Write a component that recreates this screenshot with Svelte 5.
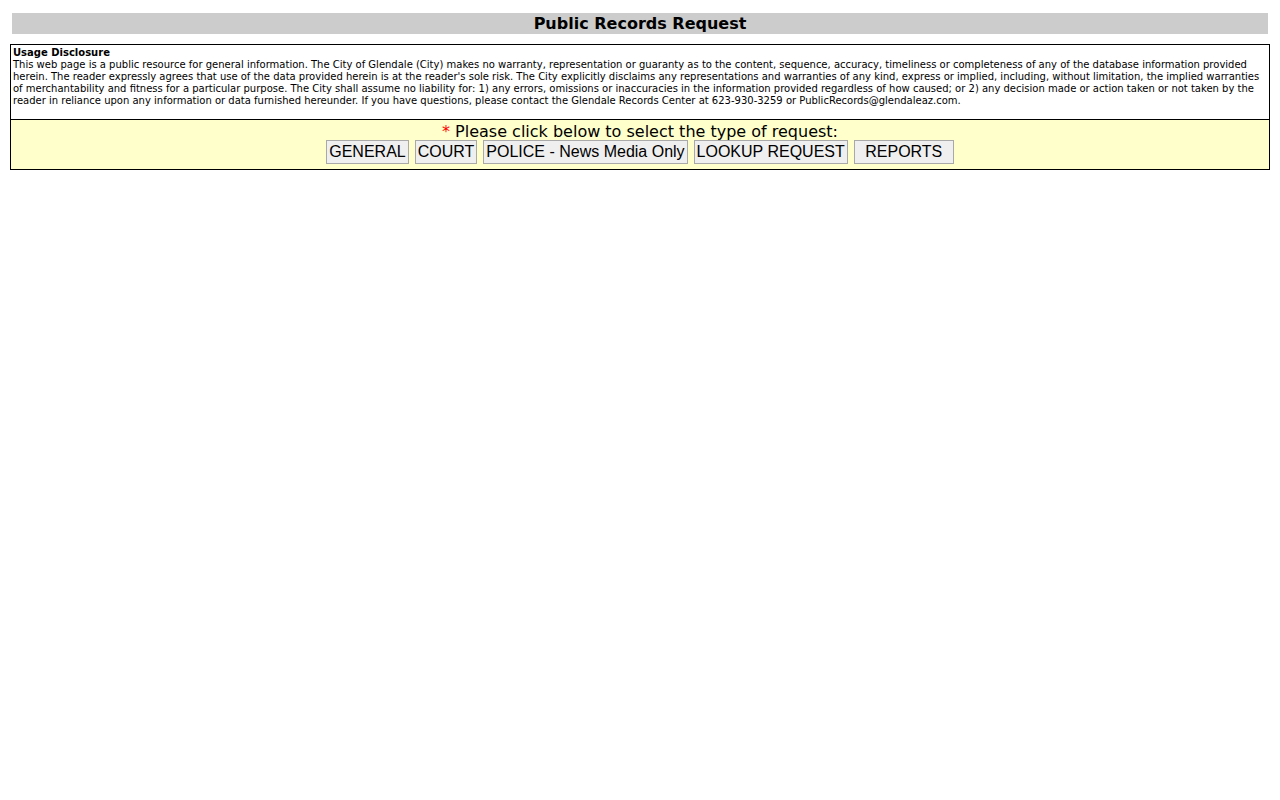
<script>
  const requestTypes = ['GENERAL', 'COURT', 'POLICE - News Media Only', 'LOOKUP REQUEST', 'REPORTS'];
</script>

<main>
  <h1>Public Records Request</h1>
  <div class="panel">
    <section class="disclosure">
      <h2>Usage Disclosure</h2>
      <p>
        This web page is a public resource for general information. The City of Glendale (City) makes no warranty, representation or guaranty as to the content, sequence, accuracy, timeliness or completeness of any of the database information provided herein. The reader expressly agrees that use of the data provided herein is at the reader's sole risk. The City explicitly disclaims any representations and warranties of any kind, express or implied, including, without limitation, the implied warranties of merchantability and fitness for a particular purpose. The City shall assume no liability for: 1) any errors, omissions or inaccuracies in the information provided regardless of how caused; or 2) any decision made or action taken or not taken by the reader in reliance upon any information or data furnished hereunder. If you have questions, please contact the Glendale Records Center at 623-930-3259 or PublicRecords@glendaleaz.com.
      </p>
    </section>
    <section class="request">
      <p><span class="required">*</span> Please click below to select the type of request:</p>
      <div class="buttons">
        {#each requestTypes as type}
          <button type="button" class:wide={type === 'REPORTS'}>{type}</button>
        {/each}
      </div>
    </section>
  </div>
</main>

<style>
  :global(body) {
    background: #fff;
  }
  main {
    padding: 13px 10px;
    color: #000;
    font-family: Verdana, "DejaVu Sans", sans-serif;
  }
  h1 {
    margin: 0 2px 10px;
    padding-top: 1px;
    background: #ccc;
    font-size: 16px;
    line-height: 20px;
    text-align: center;
  }
  .panel {
    border: 1px solid #000;
  }
  .disclosure {
    padding: 2px 2px 12px;
    font-size: 10px;
    line-height: 12px;
  }
  h2 {
    margin: 0;
    font-size: 10px;
  }
  p {
    margin: 0;
  }
  .request {
    padding: 4px 2px 5px;
    border-top: 1px solid #000;
    background: #ffc;
    font-size: 16px;
    line-height: 16px;
    text-align: center;
  }
  .required {
    color: #f00;
  }
  .buttons {
    display: flex;
    flex-wrap: wrap;
    justify-content: center;
    gap: 6px;
  }
  button {
    height: 24px;
    padding: 0 2px;
    border: 1px solid #a9a9a9;
    background: #efefef;
    color: #000;
    font-family: "Liberation Sans", Arial, sans-serif;
    font-size: 16px;
    line-height: 18px;
  }
  .wide {
    width: 100px;
  }
</style>
